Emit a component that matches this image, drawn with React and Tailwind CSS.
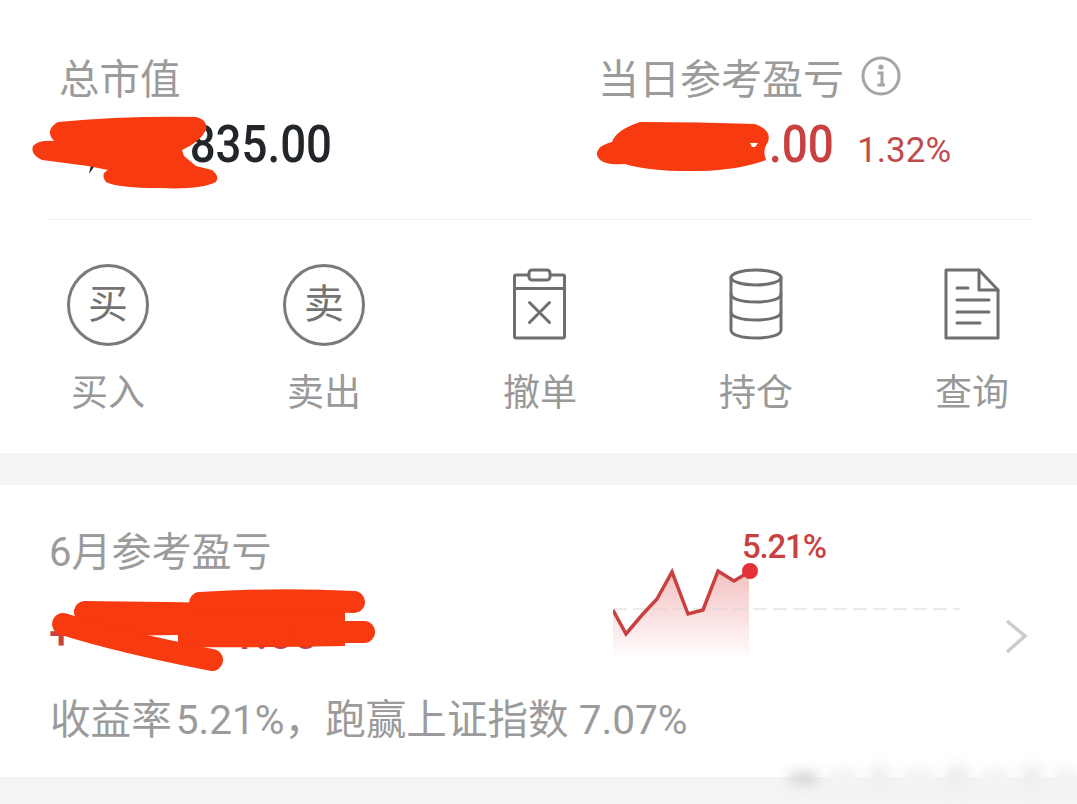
const cjk = "font-['Roboto','Noto_Sans_CJK_SC',sans-serif]"

function ClipboardIcon() {
  return (
    <svg width="56" height="72" viewBox="0 0 56 72" fill="none" stroke="#6f6f6f" strokeWidth="3" strokeLinejoin="round" strokeLinecap="round" className="-mt-[2px]">
      <rect x="2.5" y="7" width="50" height="63" rx="1.5" />
      <rect x="17" y="2" width="21" height="10" rx="3" fill="#fff" />
      <path d="M2.5 20.5H52.5" />
      <path d="M17.5 34.5L37.5 54.5M37.5 34.5L17.5 54.5" />
    </svg>
  )
}

function DatabaseIcon() {
  return (
    <svg width="56" height="72" viewBox="0 0 56 72" fill="none" stroke="#6f6f6f" strokeWidth="3" strokeLinecap="round" className="-mt-[2px]">
      <ellipse cx="28" cy="9.5" rx="25" ry="7.5" />
      <path d="M3 9.5V62C3 67 14 70 28 70S53 67 53 62V9.5" />
      <path d="M3 26C3 31 14 34 28 34S53 31 53 26" />
      <path d="M3 44C3 49 14 52 28 52S53 49 53 44" />
    </svg>
  )
}

function DocumentIcon() {
  return (
    <svg width="56" height="72" viewBox="0 0 56 72" fill="none" stroke="#6f6f6f" strokeWidth="3" strokeLinejoin="round" strokeLinecap="round" className="-mt-[2px]">
      <path d="M2 2H35L54 22V70H2Z" />
      <path d="M35 2V22H54" />
      <path d="M13 20H24M13 32H45M13 44H45M13 55H36" />
    </svg>
  )
}

function CircleGlyph({ children }) {
  return (
    <div className={`flex h-[82px] w-[82px] items-center justify-center rounded-full border-[3px] border-[#7a7a7a] text-[40px] leading-none text-[#737373] ${cjk}`}>
      {children}
    </div>
  )
}

function Action({ label, children }) {
  return (
    <div className="flex flex-col items-center">
      <div className="flex h-[82px] items-center justify-center">{children}</div>
      <div className={`mt-[26px] text-[37px] leading-[44px] text-[#999999] ${cjk}`}>{label}</div>
    </div>
  )
}

function TrendChart() {
  return (
    <div className="relative mt-[45px] h-[130px] w-[430px]">
      <svg width="430" height="130" viewBox="613 530 430 130" fill="none">
        <defs>
          <linearGradient id="trendFill" x1="0" y1="0" x2="0" y2="1">
            <stop offset="0" stopColor="#e5686a" stopOpacity="0.42" />
            <stop offset="1" stopColor="#e5686a" stopOpacity="0.02" />
          </linearGradient>
        </defs>
        <path d="M613 610L626 634L642 615L657 599L672 572L688 614L703 610L718 571L734 581L749 572V656H613Z" fill="url(#trendFill)" />
        <path d="M613 609H960" stroke="#d6d6d6" strokeWidth="1" strokeDasharray="14 6" />
        <path d="M613 610L626 634L642 615L657 599L672 572L688 614L703 610L718 571L734 581L749 572" stroke="#c8403f" strokeWidth="3.5" />
        <circle cx="750" cy="571" r="8" fill="#e5303a" />
        <path d="M1007 621L1025 636L1007 652" stroke="#cccccc" strokeWidth="3.5" />
      </svg>
      <span className="absolute left-[129px] top-[-1px] font-['Roboto',sans-serif] text-[33px] font-medium leading-[36px] tracking-[-1.2px] text-[#c8403f]">
        5.21%
      </span>
    </div>
  )
}

function Redactions() {
  return (
    <svg className="pointer-events-none absolute left-0 top-0" width="1077" height="804" viewBox="0 0 1077 804" fill="none" stroke="#f73a10" strokeLinecap="round">
      <path d="M92 160L96 164L89 174Z" fill="#22262b" stroke="none" />
      <g fill="#f73a10" stroke="none">
        <path d="M58 122Q120 116 196 117Q208 120 206 130Q200 142 182 150L184 156L196 166L212 170Q220 176 216 182Q200 190 160 188Q118 188 106 182Q100 174 108 170L88 166L42 160Q30 154 33 146Q38 140 54 141Q44 130 58 122Z" />
        <path d="M640 122Q700 122 755 124Q772 130 768 142Q762 150 766 160Q740 170 700 171Q650 172 625 164Q600 166 597 155Q596 146 612 142Q616 130 640 122Z" />
        <path d="M84 601Q200 602 345 606V646Q260 648 178 647V635L95 636Q72 620 74 610Q76 602 84 601Z" />
      </g>
      <path d="M750 143H758L755 147H752Z" fill="#ffffff" stroke="none" />
      <path d="M200 603Q280 598 354 602" strokeWidth="22" />
      <path d="M300 632H364" strokeWidth="22" />
      <path d="M63 624Q120 642 212 660" strokeWidth="22" />
    </svg>
  )
}

function Smudge() {
  return (
    <div className="pointer-events-none absolute bottom-[8px] left-[790px] flex h-[36px] w-[287px] items-center gap-[12px] blur-[6px]">
      <div className="h-[12px] w-[28px] bg-[#d4d4d4]" />
      <div className="h-[20px] w-[30px] bg-[#f3f3f3]" />
      <div className="h-[24px] w-[22px] bg-[#efefef]" />
      <div className="h-[20px] w-[34px] bg-[#f3f3f3]" />
      <div className="h-[26px] w-[24px] bg-[#eeeeee]" />
      <div className="h-[20px] w-[30px] bg-[#f3f3f3]" />
      <div className="h-[26px] w-[22px] bg-[#eeeeee]" />
      <div className="h-[20px] w-[24px] bg-[#f2f2f2]" />
    </div>
  )
}

export default function App() {
  return (
    <main className={`relative h-[804px] w-[1077px] overflow-hidden bg-[#f4f4f4] ${cjk}`}>
      <section className="h-[453px] bg-white pt-[56px]">
        <div className="flex">
          <div className="w-[598px] pl-[59px]">
            <div className="text-[40.5px] leading-[48px] text-[#9b9b9b]">总市值</div>
            <div className="mt-[13px] h-[56px] origin-left scale-x-[.895] pl-[146px] font-['Roboto',sans-serif] text-[51px] font-medium leading-[56px] text-[#22262b]">
              835.00
            </div>
          </div>
          <div>
            <div className="flex items-center gap-[17px]">
              <span className="text-[41px] leading-[48px] text-[#9b9b9b]">当日参考盈亏</span>
              <svg width="40" height="40" viewBox="0 0 40 40" fill="none" className="-mt-[8px]">
                <circle cx="20" cy="20" r="18" stroke="#a5a5a5" strokeWidth="3" />
                <circle cx="20" cy="11" r="2.6" fill="#a5a5a5" />
                <path d="M16.5 17H21V28M16.5 29H24" stroke="#a5a5a5" strokeWidth="3" />
              </svg>
            </div>
            <div className="mt-[13px] flex h-[56px] items-baseline pl-[171px] font-['Roboto',sans-serif] leading-[56px]">
              <span className="inline-block origin-left scale-x-[.9] text-[51px] font-medium text-[#c8403f]">.00</span>
              <span className="ml-[16px] text-[35px] text-[#c04a4a]">1.32%</span>
            </div>
          </div>
        </div>
        <div className="mx-[47px] mt-[46px] h-px w-[986px] bg-[#eeeeee]" />
        <div className="grid grid-cols-[repeat(5,216px)] pt-[44px]">
          <Action label="买入"><CircleGlyph>买</CircleGlyph></Action>
          <Action label="卖出"><CircleGlyph>卖</CircleGlyph></Action>
          <Action label="撤单"><ClipboardIcon /></Action>
          <Action label="持仓"><DatabaseIcon /></Action>
          <Action label="查询"><DocumentIcon /></Action>
        </div>
      </section>
      <section className="mt-[32px] flex h-[292px] items-start bg-white pl-[49px]">
        <div className="w-[564px] shrink-0 pt-[44px]">
          <div className="text-[40px] leading-[48px] text-[#9b9b9b]">6月参考盈亏</div>
          <div className="mt-[32px] flex h-[50px] justify-between pr-[295px] font-['Roboto',sans-serif] text-[44px] font-medium leading-[50px] text-[#c8403f]">
            <span>+</span>
            <span>1.00</span>
          </div>
          <div className="mt-[37px] whitespace-nowrap pl-[1px] text-[40.6px] leading-[48px] text-[#9b9b9b]">
            收益率<span className="ml-[4px]">5.21%，跑赢上证指数 7.07%</span>
          </div>
        </div>
        <TrendChart />
      </section>
      <Redactions />
      <Smudge />
    </main>
  )
}
